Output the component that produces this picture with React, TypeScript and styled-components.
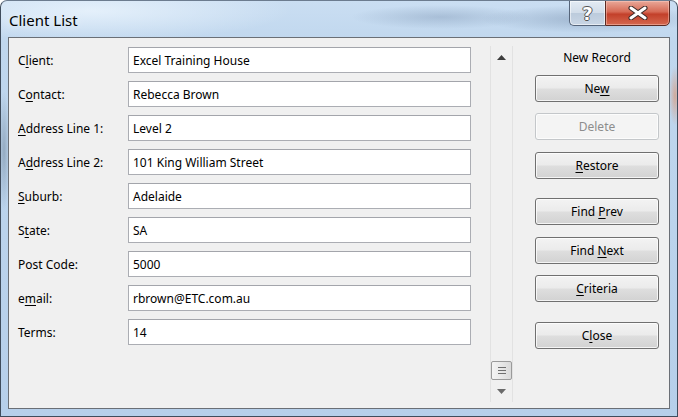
import React from 'react'
import styled, { createGlobalStyle } from 'styled-components'

const GlobalStyle = createGlobalStyle`
  html, body {
    margin: 0;
    padding: 0;
    background: #ffffff;
  }
  body {
    font-family: 'Noto Sans', 'Open Sans', sans-serif;
    font-size: 12px;
    color: #000;
  }
`

type Campo = { rotulo: React.ReactNode; valor: string }

const campos: Campo[] = [
  { rotulo: <>C<Tecla>l</Tecla>ient:</>, valor: 'Excel Training House' },
  { rotulo: <>C<Tecla>o</Tecla>ntact:</>, valor: 'Rebecca Brown' },
  { rotulo: <><Tecla>A</Tecla>ddress Line 1:</>, valor: 'Level 2' },
  { rotulo: <>A<Tecla>d</Tecla>dress Line 2:</>, valor: '101 King William Street' },
  { rotulo: <><Tecla>S</Tecla>uburb:</>, valor: 'Adelaide' },
  { rotulo: <>S<Tecla>t</Tecla>ate:</>, valor: 'SA' },
  { rotulo: <>Post Code:</>, valor: '5000' },
  { rotulo: <>e<Tecla>m</Tecla>ail:</>, valor: 'rbrown@ETC.com.au' },
  { rotulo: <>Terms:</>, valor: '14' },
]

type Botao = { texto: React.ReactNode; espaco: number; desativado?: boolean }

const botoes: Botao[] = [
  { texto: <>Ne<Tecla>w</Tecla></>, espaco: 0 },
  { texto: <>Delete</>, espaco: 11, desativado: true },
  { texto: <><Tecla>R</Tecla>estore</>, espaco: 12 },
  { texto: <>Find <Tecla>P</Tecla>rev</>, espaco: 19 },
  { texto: <>Find <Tecla>N</Tecla>ext</>, espaco: 12 },
  { texto: <><Tecla>C</Tecla>riteria</>, espaco: 11 },
  { texto: <>C<Tecla>l</Tecla>ose</>, espaco: 20 },
]

export default function App() {
  return (
    <>
      <GlobalStyle />
      <Janela>
        <BarraTitulo>
          <Titulo>Client List</Titulo>
          <Controles>
            <BotaoAjuda>?</BotaoAjuda>
            <BotaoFechar>
              <svg width="20" height="14" viewBox="0 0 20 14">
                <path d="M3 2 L17 12 M17 2 L3 12" stroke="#3b2a28" strokeWidth="5" strokeLinecap="round" />
                <path d="M3 2 L17 12 M17 2 L3 12" stroke="#ffffff" strokeWidth="3" strokeLinecap="round" />
              </svg>
            </BotaoFechar>
          </Controles>
        </BarraTitulo>

        <Cliente>
          <Formulario>
            {campos.map((c, i) => (
              <Linha key={i}>
                <Rotulo>{c.rotulo}</Rotulo>
                <Caixa>{c.valor}</Caixa>
              </Linha>
            ))}
          </Formulario>

          <Rolagem>
            <Seta>
              <svg width="9" height="5" viewBox="0 0 9 5">
                <path d="M0 5 L4.5 0 L9 5 Z" fill="#3c3c3c" />
              </svg>
            </Seta>
            <Trilho />
            <Polegar>
              <Risco />
              <Risco />
              <Risco />
            </Polegar>
            <Seta>
              <svg width="9" height="5" viewBox="0 0 9 5">
                <path d="M0 0 L9 0 L4.5 5 Z" fill="#6a6a6a" />
              </svg>
            </Seta>
          </Rolagem>

          <Acoes>
            <Legenda>New Record</Legenda>
            {botoes.map((b, i) => (
              <Botao key={i} espaco={b.espaco} desativado={b.desativado}>
                <span>{b.texto}</span>
              </Botao>
            ))}
          </Acoes>
        </Cliente>
      </Janela>
    </>
  )
}

function Tecla({ children }: { children: React.ReactNode }) {
  return <Sublinhado>{children}</Sublinhado>
}

const Sublinhado = styled.span`
  text-decoration: underline;
  text-underline-offset: 2px;
`

const Janela = styled.div`
  width: 678px;
  height: 417px;
  box-sizing: border-box;
  display: flex;
  flex-direction: column;
  border: 1px solid #3f4c5c;
  border-top-color: #6c7c8f;
  border-radius: 7px 7px 0 0;
  padding: 0 7px 7px 7px;
  overflow: hidden;
  background:
    radial-gradient(ellipse 110px 14px at 590px 18px, rgba(70, 95, 130, 0.3), transparent),
    radial-gradient(ellipse 90px 12px at 440px 16px, rgba(80, 105, 140, 0.25), transparent),
    radial-gradient(ellipse 6px 30px at 674px 95px, rgba(220, 140, 100, 0.6), transparent),
    radial-gradient(ellipse 6px 60px at 3px 150px, rgba(70, 90, 110, 0.35), transparent),
    radial-gradient(ellipse 200px 30px at 90px 10px, rgba(240, 248, 255, 0.7), transparent),
    linear-gradient(180deg, #cadef2 0%, #c0d7ee 10%, #b6cfea 100%);
`

const BarraTitulo = styled.div`
  height: 36px;
  display: flex;
  justify-content: space-between;
  align-items: flex-start;
`

const Titulo = styled.div`
  font-family: 'Noto Sans', 'Open Sans', sans-serif;
  font-size: 15px;
  line-height: 20px;
  padding: 9px 0 0 1px;
  color: #000;
  text-shadow: 0 0 8px rgba(255, 255, 255, 0.9);
`

const Controles = styled.div`
  display: flex;
  margin-top: -1px;
`

const BotaoAjuda = styled.div`
  width: 36px;
  height: 26px;
  box-sizing: border-box;
  border: 1px solid #56657a;
  border-right: none;
  border-radius: 0 0 0 5px;
  background: linear-gradient(180deg, #e3ebf4 0%, #d2dde9 48%, #bccbdc 52%, #c9d6e5 100%);
  box-shadow: inset 0 0 0 1px rgba(255, 255, 255, 0.55);
  display: flex;
  align-items: center;
  justify-content: center;
  font-family: 'DejaVu Sans', sans-serif;
  font-weight: bold;
  font-size: 18px;
  color: #fff;
  text-shadow: 1px 0 0 #555, -1px 0 0 #555, 0 1px 0 #555, 0 -1px 0 #555;
`

const BotaoFechar = styled.div`
  width: 65px;
  height: 26px;
  box-sizing: border-box;
  border: 1px solid #5b2a22;
  border-radius: 0 0 5px 0;
  background: linear-gradient(180deg, #e9a899 0%, #d66a55 45%, #c3402a 55%, #d5684f 100%);
  box-shadow: inset 0 0 0 1px rgba(255, 210, 200, 0.45);
  display: flex;
  align-items: center;
  justify-content: center;
`

const Cliente = styled.div`
  flex: 1;
  display: flex;
  border: 1px solid #6a6f76;
  background: #f0f0f0;
`

const Formulario = styled.div`
  display: flex;
  flex-direction: column;
  gap: 8px;
  padding: 9px 0 0 9px;
`

const Linha = styled.div`
  display: flex;
  align-items: center;
`

const Rotulo = styled.div`
  width: 110px;
  white-space: nowrap;
`

const Caixa = styled.div`
  width: 343px;
  height: 26px;
  box-sizing: border-box;
  border: 1px solid #abadb3;
  border-top-color: #a3a5ab;
  background: #fff;
  padding: 0 4px;
  display: flex;
  align-items: center;
  white-space: nowrap;
`

const Rolagem = styled.div`
  width: 23px;
  height: 356px;
  box-sizing: border-box;
  margin: 8px 0 0 19px;
  border-left: 1px solid #e2e2e2;
  border-right: 1px solid #e2e2e2;
  background: #f0f0f0;
  display: flex;
  flex-direction: column;
  align-items: center;
`

const Seta = styled.div`
  height: 22px;
  display: flex;
  align-items: center;
  justify-content: center;
`

const Trilho = styled.div`
  flex: 1;
`

const Polegar = styled.div`
  width: 21px;
  height: 19px;
  box-sizing: border-box;
  border: 1px solid #9a9a9a;
  border-radius: 2px;
  background: linear-gradient(90deg, #f4f4f4 0%, #e8e8e8 50%, #dadada 100%);
  display: flex;
  flex-direction: column;
  align-items: center;
  justify-content: center;
  gap: 2px;
`

const Risco = styled.div`
  width: 8px;
  height: 1px;
  background: #6f6f6f;
`

const Acoes = styled.div`
  width: 124px;
  margin-left: 22px;
  padding-top: 11px;
  display: flex;
  flex-direction: column;
`

const Legenda = styled.div`
  height: 18px;
  line-height: 18px;
  text-align: center;
  margin-bottom: 8px;
`

const Botao = styled.div<{ espaco: number; desativado?: boolean }>`
  height: 27px;
  box-sizing: border-box;
  margin-top: ${p => p.espaco}px;
  border: 1px solid ${p => (p.desativado ? '#c4c7ca' : '#707070')};
  border-radius: 3px;
  background: ${p =>
    p.desativado
      ? '#f4f4f4'
      : 'linear-gradient(180deg, #f3f3f3 0%, #ebebeb 48%, #dedede 52%, #d2d2d2 100%)'};
  box-shadow: inset 0 0 0 1px rgba(255, 255, 255, 0.75);
  color: ${p => (p.desativado ? '#8d8d8d' : '#000')};
  display: flex;
  align-items: center;
  justify-content: center;
`
